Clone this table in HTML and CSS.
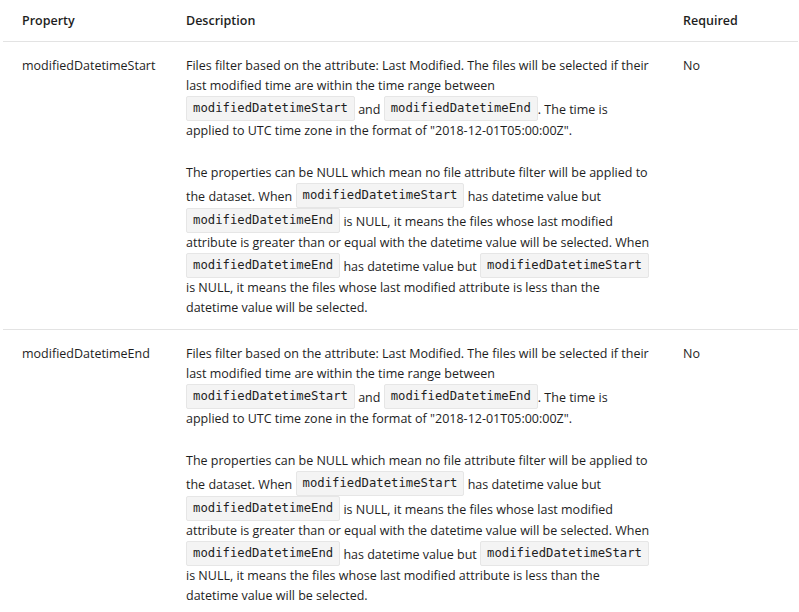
FILE: index.html
```html
<!DOCTYPE html>
<html>
<head>
<meta charset="utf-8">
<link rel="stylesheet" href="styles.css">
</head>
<body>
<table class="props">
  <thead>
    <tr>
      <th class="c-prop">Property</th>
      <th class="c-desc">Description</th>
      <th class="c-req">Required</th>
    </tr>
  </thead>
  <tbody>
    <tr>
      <td>modifiedDatetimeStart</td>
      <td class="desc">
        <p>Files filter based on the attribute: Last Modified. The files will be selected if their last modified time are within the time range between <code>modifiedDatetimeStart</code> and <code>modifiedDatetimeEnd</code>. The time is applied to UTC time zone in the format of "2018-12-01T05:00:00Z".</p>
        <p>The properties can be NULL which mean no file attribute filter will be applied to the dataset. When <code>modifiedDatetimeStart</code> has datetime value but <code>modifiedDatetimeEnd</code> is NULL, it means the files whose last modified attribute is greater than or equal with the datetime value will be selected. When <code>modifiedDatetimeEnd</code> has datetime value but <code>modifiedDatetimeStart</code> is NULL, it means the files whose last modified attribute is less than the datetime value will be selected.</p>
      </td>
      <td>No</td>
    </tr>
    <tr>
      <td>modifiedDatetimeEnd</td>
      <td class="desc">
        <p>Files filter based on the attribute: Last Modified. The files will be selected if their last modified time are within the time range between <code>modifiedDatetimeStart</code> and <code>modifiedDatetimeEnd</code>. The time is applied to UTC time zone in the format of "2018-12-01T05:00:00Z".</p>
        <p>The properties can be NULL which mean no file attribute filter will be applied to the dataset. When <code>modifiedDatetimeStart</code> has datetime value but <code>modifiedDatetimeEnd</code> is NULL, it means the files whose last modified attribute is greater than or equal with the datetime value will be selected. When <code>modifiedDatetimeEnd</code> has datetime value but <code>modifiedDatetimeStart</code> is NULL, it means the files whose last modified attribute is less than the datetime value will be selected.</p>
      </td>
      <td>No</td>
    </tr>
  </tbody>
</table>
</body>
</html>
```
FILE: styles.css
```css
html, body {
  margin: 0;
  padding: 0;
  background: #ffffff;
}
body {
  font-family: "Open Sans", "Noto Sans", sans-serif;
  font-size: 12.5px;
  color: #1e1e1e;
  overflow: hidden;
}
.props {
  border-collapse: collapse;
  margin-left: 3px;
  width: 795px;
  table-layout: fixed;
}
.c-prop { width: 145px; }
.c-desc { width: 478px; }
th {
  text-align: left;
  font-weight: 600;
  height: 41px;
  padding: 0 0 0 19px;
  border-bottom: 1px solid #e3e3e3;
  vertical-align: middle;
}
td {
  vertical-align: top;
  padding: 14px 10px 11px 19px;
  line-height: 20px;
  border-bottom: 1px solid #e3e3e3;
}
td.desc {
  padding-right: 13px;
}
td p {
  margin: 0 0 22px 0;
}
td p:last-child { margin-bottom: 0; }
code {
  font-family: "DejaVu Sans Mono", monospace;
  font-size: 12.25px;
  display: inline-block;
  line-height: 17px;
  padding: 3px 6px;
  vertical-align: 2px;
  background: #f4f4f4;
  border: 1px solid #e6e6e6;
  border-radius: 2px;
  color: #1e1e1e;
}
```
